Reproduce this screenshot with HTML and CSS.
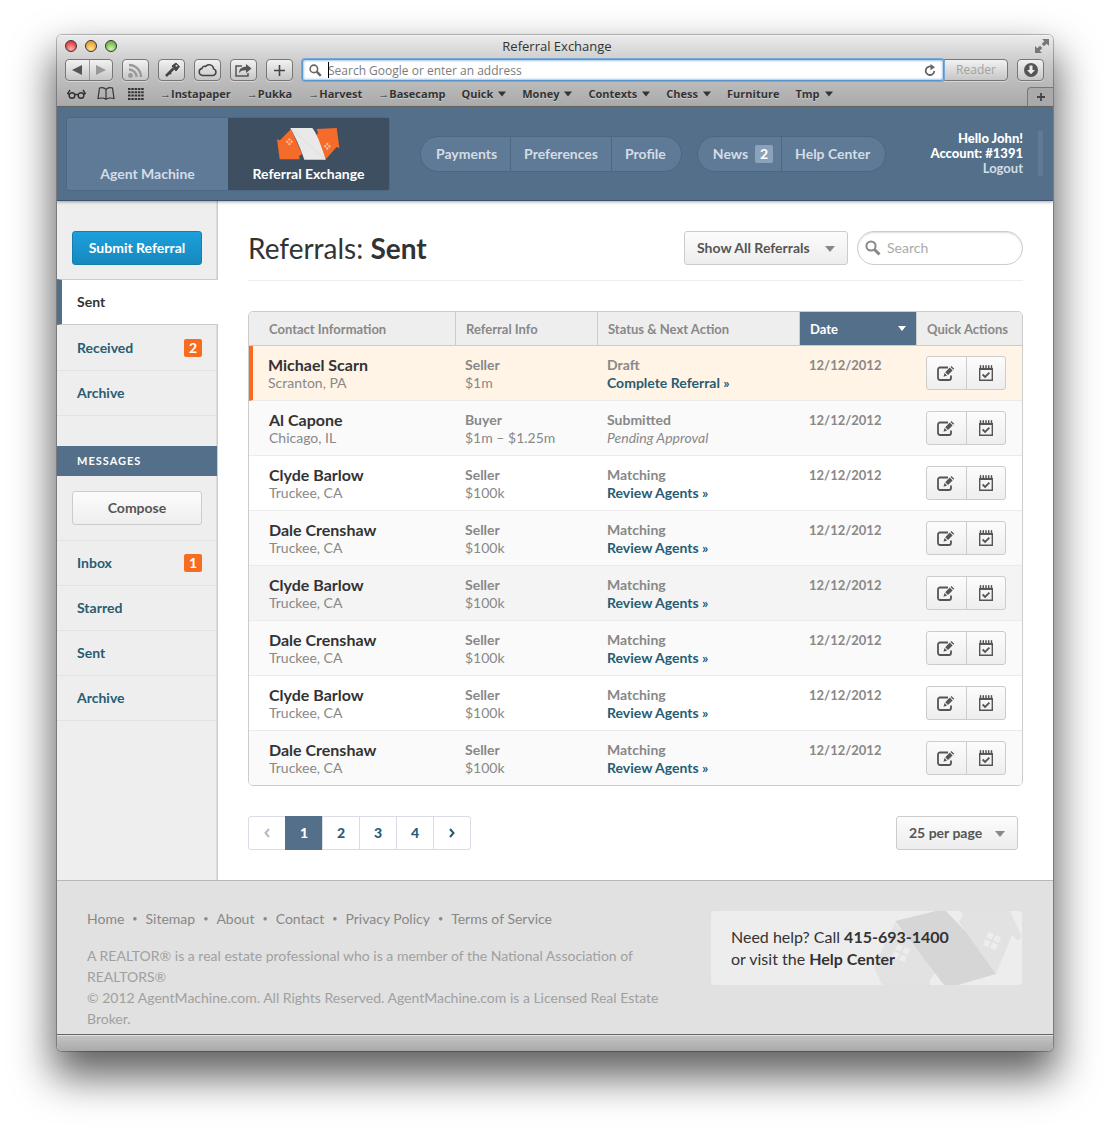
FILE: index.html
```html
<!DOCTYPE html>
<html lang="en">
<head>
<meta charset="utf-8">
<title>Referral Exchange</title>
<link rel="stylesheet" href="styles.css">
</head>
<body>
<svg class="sprite" aria-hidden="true">
  <symbol id="edit" viewBox="0 0 18 17">
    <path d="M14 10.500V13a2 2 0 0 1-2 2H3a2 2 0 0 1-2-2V4.500a2 2 0 0 1 2-2h8" fill="none" stroke="#555" stroke-width="1.800"/>
    <path d="M6.500 11.700l1-3.700 2.600 2.600zM8.200 7.200l4.600-4.600 2.800 2.800-4.600 4.500zM13.500 1.900l.9-.9 2.800 2.800-.9.900z" fill="#555"/>
  </symbol>
  <symbol id="calendar" viewBox="0 0 16 18">
    <path d="M1.700 4.700h12.600v11.600H1.700z" fill="none" stroke="#555" stroke-width="1.400"/>
    <path d="M1 5h14" stroke="#555" stroke-width="1.800"/>
    <path d="M2.500 4V1.800M5.300 4V1.800M8 4V1.800M10.700 4V1.800M13.500 4V1.800" stroke="#555" stroke-width="1.500" stroke-linecap="round"/>
    <path d="M4.600 10.500l2.500 2.500 4.300-4.300" fill="none" stroke="#555" stroke-width="1.800"/>
  </symbol>
  <symbol id="caret" viewBox="0 0 10 6"><path d="M0 0h10L5 6z" fill="currentColor"/></symbol>
  <symbol id="lens" viewBox="0 0 16 16">
    <circle cx="6" cy="6" r="4.600" fill="none" stroke="currentColor" stroke-width="2"/>
    <path d="M9.500 9.500l5 5" stroke="currentColor" stroke-width="3"/>
  </symbol>
</svg>

<div class="window">
  <div class="chrome">
    <div class="titlebar">
      <span class="lights"><i class="red"></i><i class="amber"></i><i class="green"></i></span>
      <span class="window-title">Referral Exchange</span>
      <svg class="expand" width="14" height="14" viewBox="0 0 14 14" fill="#777"><path d="M7 0h7v7l-2.300-2.300L9 7.300 6.700 5l2.600-2.700zM0 7l2.300 2.300L5 6.700 7.300 9l-2.600 2.700L7 14H0z"/></svg>
    </div>
    <div class="toolbar">
      <div class="history">
        <button aria-label="Back"><svg width="10" height="10" viewBox="0 0 10 10"><path d="M10 0v10L0 5z" fill="#555"/></svg></button>
        <button aria-label="Forward"><svg width="10" height="10" viewBox="0 0 10 10"><path d="M0 0v10l10-5z" fill="#999"/></svg></button>
      </div>
      <button class="tool" aria-label="Feeds"><svg width="15" height="15" viewBox="0 0 15 15" fill="none" stroke="#999" stroke-width="2.400"><circle cx="2.500" cy="12.500" r="1.200" fill="#999"/><path d="M1 6.500A7.500 7.500 0 0 1 8.500 14M1 2a12 12 0 0 1 12 12"/></svg></button>
      <button class="tool" aria-label="Passwords"><svg width="16" height="16" viewBox="0 0 16 16"><path d="M8 4l4-3 3.500 3.500L12 9z" fill="#444" stroke="#444" stroke-linejoin="round"/><path d="M9.500 6.500L2 14" stroke="#444" stroke-width="2.600"/><path d="M5 10l2 2" stroke="#444" stroke-width="2"/><circle cx="12.500" cy="3.700" r="1" fill="#ddd"/></svg></button>
      <button class="tool" aria-label="Cloud tabs"><svg width="20" height="14" viewBox="0 0 20 14"><path d="M4.500 12.500a3.500 3.500 0 0 1-.6-6.900 2.700 2.700 0 0 1 3.600-2.100 4.500 4.500 0 0 1 8.100 2.400 3.400 3.400 0 0 1-.6 6.600z" fill="none" stroke="#444" stroke-width="1.500"/></svg></button>
      <button class="tool" aria-label="Share"><svg width="17" height="14" viewBox="0 0 17 14"><path d="M7 3H1v10h12v-3" fill="none" stroke="#555" stroke-width="1.500"/><path d="M4 10c0-4 2.500-6.300 7-6.300V1l5.500 4.500L11 10V7.200C8 7 6 7.500 4 10z" fill="#555"/></svg></button>
      <button class="tool" aria-label="Add bookmark"><svg width="11" height="11" viewBox="0 0 11 11"><path d="M5.500 0v11M0 5.500h11" stroke="#444" stroke-width="1.600"/></svg></button>
      <div class="address">
        <svg class="address-lens" width="13" height="13"><use href="#lens"/></svg>
        <input type="text" aria-label="Address" placeholder="Search Google or enter an address">
        <span class="cursor"></span>
        <svg width="12" height="13" viewBox="0 0 12 13"><path d="M8.500 3.200A4.300 4.300 0 1 0 10.300 7" fill="none" stroke="#666" stroke-width="1.800"/><path d="M6.500 0l4.500 3.300-4.500 3z" fill="#666"/></svg>
      </div>
      <button class="reader" disabled>Reader</button>
      <button class="tool download" aria-label="Downloads"><svg width="14" height="14" viewBox="0 0 14 14"><circle cx="7" cy="7" r="7" fill="#555"/><path d="M5.500 2.500h3V7H11l-4 4.300L3 7h2.500z" fill="#eee"/></svg></button>
    </div>
    <div class="bookmarks">
      <svg width="19" height="10" viewBox="0 0 19 10" fill="none" stroke="#333" stroke-width="1.400"><circle cx="5" cy="6.500" r="2.800"/><circle cx="14" cy="6.500" r="2.800"/><path d="M7.800 5.500h3.400M2.300 5.500L.7 4.500 3 1M16.700 5.500l1.600-1L16 1"/></svg>
      <svg class="book" width="18" height="13" viewBox="0 0 18 13" fill="none" stroke="#333" stroke-width="1.200"><path d="M9 2.500C7.500.5 4.500.5 2.500 1L1 11.500c3-.8 6-.5 8 .8 2-1.300 5-1.600 8-.8L15.500 1c-2-.5-5-.5-6.500 1.500zM9 2.500v9.800"/></svg>
      <svg class="dots" width="16" height="12" viewBox="0 0 16 12" stroke="#333" stroke-width="2"><path d="M0 1h16M0 4.300h16M0 7.600h16M0 10.900h16" stroke-dasharray="2.500 .8"/></svg>
      <a href="#">→Instapaper</a><a href="#">→Pukka</a><a href="#">→Harvest</a><a href="#">→Basecamp</a>
      <a href="#">Quick<svg width="8" height="6"><use href="#caret"/></svg></a>
      <a href="#">Money<svg width="8" height="6"><use href="#caret"/></svg></a>
      <a href="#">Contexts<svg width="8" height="6"><use href="#caret"/></svg></a>
      <a href="#">Chess<svg width="8" height="6"><use href="#caret"/></svg></a>
      <a href="#">Furniture</a>
      <a href="#">Tmp<svg width="8" height="6"><use href="#caret"/></svg></a>
      <button class="new-tab" aria-label="New tab"><svg width="8" height="8" viewBox="0 0 8 8"><path d="M4 0v8M0 4h8" stroke="#444" stroke-width="1.800"/></svg></button>
    </div>
  </div>

  <header class="app-header">
    <nav class="apps">
      <a href="#">Agent Machine</a>
      <a href="#" class="current">
        <svg width="63" height="32" viewBox="0 0 63 32">
          <path d="M14 1L3 12.300l-3-1 2.700 20h20l-.6-3.300 3-2z" fill="#f56b2a"/>
          <path d="M39.700 1l20-1 2.700 20-2.800-1-11 12.500L38.500 8l2.500-3z" fill="#f56b2a"/>
          <path d="M13.300 0h22C39 4 45 19 48.700 31.700H27.300C24 22 20 12 13.300 0z" fill="#e9e9e9"/>
          <path d="M15 2c8 7 18 15 33 29.700" stroke="#ddd" fill="none"/>
          <path d="M12.300 10l1.500 1.500-1.500 1.500-1.500-1.500zM14.500 12.200l1.500 1.500-1.500 1.500-1.500-1.500zM10.200 12.200l1.500 1.500-1.500 1.500-1.500-1.500zM12.300 14.400l1.500 1.500-1.500 1.500-1.500-1.500zM50.300 14.500l1.500 1.500-1.500 1.500-1.500-1.500zM52.500 16.700l1.500 1.500-1.500 1.500-1.500-1.500zM48.200 16.700l1.500 1.500-1.500 1.500-1.500-1.500zM50.300 18.900l1.500 1.500-1.500 1.500-1.500-1.500z" fill="#fbbd98"/>
        </svg>
        Referral Exchange
      </a>
    </nav>
    <nav class="pills">
      <a href="#">Payments</a><a href="#">Preferences</a><a href="#">Profile</a>
    </nav>
    <nav class="pills">
      <a href="#">News <span class="count">2</span></a><a href="#">Help Center</a>
    </nav>
    <div class="user">
      <strong>Hello John!</strong>
      <strong>Account: #1391</strong>
      <a href="#">Logout</a>
    </div>
  </header>

  <div class="content">
    <aside class="sidebar">
      <div class="action"><button class="primary">Submit Referral</button></div>
      <ul class="menu">
        <li class="active"><a href="#">Sent</a></li>
        <li><a href="#">Received <span class="badge">2</span></a></li>
        <li><a href="#">Archive</a></li>
      </ul>
      <h2>MESSAGES</h2>
      <div class="compose"><button class="plain">Compose</button></div>
      <ul class="menu">
        <li><a href="#">Inbox <span class="badge">1</span></a></li>
        <li><a href="#">Starred</a></li>
        <li><a href="#">Sent</a></li>
        <li><a href="#">Archive</a></li>
      </ul>
    </aside>

    <main>
      <div class="heading">
        <h1>Referrals: <strong>Sent</strong></h1>
        <div class="picker filter">
          <select aria-label="Filter referrals"><option>Show All Referrals</option></select>
          <svg width="10" height="6"><use href="#caret"/></svg>
        </div>
        <label class="search">
          <svg width="16" height="16"><use href="#lens"/></svg>
          <input type="search" placeholder="Search" aria-label="Search">
        </label>
      </div>

      <div class="table-frame">
        <table>
          <colgroup><col><col class="c-info"><col class="c-status"><col class="c-date"><col class="c-actions"></colgroup>
          <thead>
            <tr><th>Contact Information</th><th>Referral Info</th><th>Status &amp; Next Action</th><th class="sorted"><span>Date <svg width="8" height="5" viewBox="0 0 10 6"><path d="M0 0h10L5 6z" fill="#fff"/></svg></span></th><th>Quick Actions</th></tr>
          </thead>
          <tbody>
            <tr class="draft"><td><b>Michael Scarn</b>Scranton, PA</td><td><strong>Seller</strong>$1m</td><td><strong>Draft</strong><a href="#">Complete Referral »</a></td><td class="date"><strong>12/12/2012</strong></td><td><div class="quick"><button aria-label="Edit"><svg width="18" height="17"><use href="#edit"/></svg></button><button aria-label="Schedule"><svg width="16" height="18"><use href="#calendar"/></svg></button></div></td></tr>
            <tr><td><b>Al Capone</b>Chicago, IL</td><td><strong>Buyer</strong>$1m – $1.25m</td><td><strong>Submitted</strong><em>Pending Approval</em></td><td class="date"><strong>12/12/2012</strong></td><td><div class="quick"><button aria-label="Edit"><svg width="18" height="17"><use href="#edit"/></svg></button><button aria-label="Schedule"><svg width="16" height="18"><use href="#calendar"/></svg></button></div></td></tr>
            <tr><td><b>Clyde Barlow</b>Truckee, CA</td><td><strong>Seller</strong>$100k</td><td><strong>Matching</strong><a href="#">Review Agents »</a></td><td class="date"><strong>12/12/2012</strong></td><td><div class="quick"><button aria-label="Edit"><svg width="18" height="17"><use href="#edit"/></svg></button><button aria-label="Schedule"><svg width="16" height="18"><use href="#calendar"/></svg></button></div></td></tr>
            <tr><td><b>Dale Crenshaw</b>Truckee, CA</td><td><strong>Seller</strong>$100k</td><td><strong>Matching</strong><a href="#">Review Agents »</a></td><td class="date"><strong>12/12/2012</strong></td><td><div class="quick"><button aria-label="Edit"><svg width="18" height="17"><use href="#edit"/></svg></button><button aria-label="Schedule"><svg width="16" height="18"><use href="#calendar"/></svg></button></div></td></tr>
            <tr class="hovered"><td><b>Clyde Barlow</b>Truckee, CA</td><td><strong>Seller</strong>$100k</td><td><strong>Matching</strong><a href="#">Review Agents »</a></td><td class="date"><strong>12/12/2012</strong></td><td><div class="quick"><button aria-label="Edit"><svg width="18" height="17"><use href="#edit"/></svg></button><button aria-label="Schedule"><svg width="16" height="18"><use href="#calendar"/></svg></button></div></td></tr>
            <tr><td><b>Dale Crenshaw</b>Truckee, CA</td><td><strong>Seller</strong>$100k</td><td><strong>Matching</strong><a href="#">Review Agents »</a></td><td class="date"><strong>12/12/2012</strong></td><td><div class="quick"><button aria-label="Edit"><svg width="18" height="17"><use href="#edit"/></svg></button><button aria-label="Schedule"><svg width="16" height="18"><use href="#calendar"/></svg></button></div></td></tr>
            <tr><td><b>Clyde Barlow</b>Truckee, CA</td><td><strong>Seller</strong>$100k</td><td><strong>Matching</strong><a href="#">Review Agents »</a></td><td class="date"><strong>12/12/2012</strong></td><td><div class="quick"><button aria-label="Edit"><svg width="18" height="17"><use href="#edit"/></svg></button><button aria-label="Schedule"><svg width="16" height="18"><use href="#calendar"/></svg></button></div></td></tr>
            <tr><td><b>Dale Crenshaw</b>Truckee, CA</td><td><strong>Seller</strong>$100k</td><td><strong>Matching</strong><a href="#">Review Agents »</a></td><td class="date"><strong>12/12/2012</strong></td><td><div class="quick"><button aria-label="Edit"><svg width="18" height="17"><use href="#edit"/></svg></button><button aria-label="Schedule"><svg width="16" height="18"><use href="#calendar"/></svg></button></div></td></tr>
          </tbody>
        </table>
      </div>

      <div class="paging">
        <nav class="pages">
          <a href="#" class="off" aria-label="Previous"><svg width="6" height="10" viewBox="0 0 6 10"><path d="M5 1L1.500 5 5 9" fill="none" stroke="currentColor" stroke-width="2"/></svg></a>
          <a href="#" class="current">1</a><a href="#">2</a><a href="#">3</a><a href="#">4</a>
          <a href="#" aria-label="Next"><svg width="6" height="10" viewBox="0 0 6 10"><path d="M1 1l3.500 4L1 9" fill="none" stroke="currentColor" stroke-width="2"/></svg></a>
        </nav>
        <div class="picker per-page">
          <select aria-label="Rows per page"><option>25 per page</option></select>
          <svg width="10" height="6"><use href="#caret"/></svg>
        </div>
      </div>
    </main>
  </div>

  <footer class="app-footer">
    <div class="legal">
      <ul><li><a href="#">Home</a></li><li><a href="#">Sitemap</a></li><li><a href="#">About</a></li><li><a href="#">Contact</a></li><li><a href="#">Privacy Policy</a></li><li><a href="#">Terms of Service</a></li></ul>
      <p>A REALTOR® is a real estate professional who is a member of the National Association of REALTORS®</p>
      <p>© 2012 AgentMachine.com. All Rights Reserved. AgentMachine.com is a Licensed Real Estate Broker.</p>
    </div>
    <div class="help">
      <svg width="148" height="74" viewBox="163 0 148 74">
        <path d="M184 12L163 56l8 18h48v-5l5-7zM249 0h50l11 24c1 4-2 5-4 5l-5-5-16 39-37-52 4-8z" fill="#e2e2e2"/>
        <path d="M184 10l41-10h10l20 21 30 42-38 11h-14z" fill="#d6d6d6"/>
        <g fill="#ededed">
          <g transform="rotate(24 190 42)"><rect x="183" y="35" width="6" height="6" rx="1"/><rect x="191" y="35" width="6" height="6" rx="1"/><rect x="183" y="43" width="6" height="6" rx="1"/><rect x="191" y="43" width="6" height="6" rx="1"/></g>
          <g transform="rotate(24 281 30)"><rect x="274" y="23" width="6" height="6" rx="1"/><rect x="282" y="23" width="6" height="6" rx="1"/><rect x="274" y="31" width="6" height="6" rx="1"/><rect x="282" y="31" width="6" height="6" rx="1"/></g>
        </g>
      </svg>
      <p>Need help? Call <strong>415-693-1400</strong><br>or visit the <strong>Help Center</strong></p>
    </div>
  </footer>
  <div class="statusbar"></div>
</div>
</body>
</html>
```
FILE: styles.css
```css
* { box-sizing: border-box; }
body { margin: 0; padding: 35px 57px 78px; background: #fff; font: 14px/18px Lato, "Liberation Sans", sans-serif; color: #888; }
a { color: inherit; text-decoration: none; }
button, input, select { font: inherit; color: inherit; margin: 0; }
button { display: flex; align-items: center; justify-content: center; padding: 0; cursor: pointer; }
ul, h1, h2, p { margin: 0; padding: 0; list-style: none; }
svg { display: block; flex: none; }
.sprite { position: absolute; width: 0; height: 0; }

.window { border-radius: 5px; overflow: hidden; box-shadow: 0 0 0 1px rgba(0,0,0,.25), 0 22px 40px 4px rgba(0,0,0,.62); }

/* Browser frame */
.chrome { height: 72px; background: linear-gradient(#ebebeb, #c6c6c6 32px, #aaa); border-bottom: 1px solid #686868; box-shadow: inset 0 1px #f4f4f4; color: #333; font-family: "Open Sans", sans-serif; }
.titlebar { display: grid; grid-template-columns: 1fr auto 1fr; align-items: center; height: 22px; padding: 0 4px 0 8px; }
.lights { display: flex; gap: 8px; }
.lights i { width: 12px; height: 12px; border-radius: 50%; border: 1px solid; }
.red { background: radial-gradient(circle at 50% 80%, #ffb0a8, #e8404a 70%); border-color: #9c2c30; }
.amber { background: radial-gradient(circle at 50% 80%, #ffe69a, #eea035 70%); border-color: #9a6a25; }
.green { background: radial-gradient(circle at 50% 80%, #d2f3a5, #76b850 70%); border-color: #4d7c38; }
.window-title { font-size: 13px; }
.expand { justify-self: end; }
.toolbar { display: flex; align-items: center; gap: 9px; height: 26px; padding: 0 9px 0 8px; }
.history, .tool, .reader { height: 22px; border: 1px solid #777; border-radius: 4px; background: linear-gradient(#f2f2f2, #c6c6c6); box-shadow: 0 1px rgba(255,255,255,.4); }
.history { display: flex; width: 48px; }
.history button { flex: 1; border: 0; background: none; }
.history button + button { border-left: 1px solid #999; }
.tool { width: 27px; }
.address { flex: 1; position: relative; display: flex; align-items: center; gap: 6px; height: 22px; padding: 0 7px 0 6px; background: #fff; border: 1px solid #5c94cc; border-radius: 3px; box-shadow: 0 0 0 1px #79a9d8, inset 0 0 2px 1px #a9c9e8; color: #666; }
.address input { flex: 1; min-width: 0; height: 20px; padding: 0; border: 0; outline: 0; background: none; font-size: 12px; }
.address input::placeholder { color: #7c7c7c; opacity: 1; }
.cursor { position: absolute; left: 25px; top: 2px; width: 1px; height: 16px; background: #000; }
.reader { width: 64px; margin-left: -9px; border-radius: 0 4px 4px 0; color: #a2a2a2; font-size: 12px; }
.bookmarks { display: flex; align-items: center; gap: 16px; height: 23px; padding: 0 0 2px 10px; font-size: 11px; font-weight: 700; white-space: nowrap; }
.bookmarks a { display: flex; align-items: center; gap: 5px; text-shadow: 0 1px rgba(255,255,255,.4); }
.book { margin-left: -5px; }
.dots { margin-left: -3px; }
.new-tab { align-self: flex-end; width: 26px; height: 19px; margin: 0 0 -2px auto; border: solid #777; border-width: 1px 0 0 1px; border-radius: 4px 0 0 0; background: #aaa; }
.statusbar { height: 17px; background: linear-gradient(#c4c4c4, #aaa); border-top: 1px solid #666; box-shadow: inset 0 1px #e0e0e0; }

/* Application header */
.app-header { display: flex; align-items: center; height: 94px; padding: 0 10px 0 9px; background: #546f8a; border-bottom: 1px solid #3c536b; color: #d5dde6; font-weight: 700; position: relative; box-shadow: 0 1px 3px rgba(0,0,0,.35); }
.apps { display: flex; width: 324px; height: 74px; border: 1px solid #4b6784; border-radius: 3px; background: #5e7a96; }
.apps a { flex: 1; display: flex; flex-direction: column; align-items: center; justify-content: flex-end; gap: 5px; padding-bottom: 7px; }
.apps .current { background: #3e4f62; color: #fff; }
.pills { display: flex; height: 36px; margin-left: 30px; border: 1px solid #4b6784; border-radius: 18px; background: #5e7a96; }
.pills + .pills { margin-left: 15px; }
.pills a { display: flex; align-items: center; gap: 7px; padding: 0 13px; }
.pills a:first-child { padding-left: 15px; }
.pills a:last-child { padding-right: 15px; }
.pills a + a { border-left: 1px solid #4b6784; }
.pills a:has(.count) { padding-right: 8px; }
.count { width: 18px; line-height: 18px; text-align: center; border-radius: 2px; background: #8da2b8; color: #fff; }
.user { display: flex; flex-direction: column; margin-left: auto; padding-right: 15px; border-right: 5px solid #5e7a96; text-align: right; font-size: 13px; line-height: 15px; }
.user strong { color: #fff; }

/* Sidebar */
.content { display: flex; background: #fff; }
.sidebar { width: 161px; background: #eee; border-right: 1px solid #ccc; box-shadow: inset -1px 0 #dcdcdc; }
.action { padding: 30px 15px 14px; }
.primary, .plain { width: 100%; height: 34px; border-radius: 3px; font-weight: 700; }
.primary { border: 1px solid #147fae; background: linear-gradient(#1ca0dc, #1788bd); color: #fff; }
.plain { border: 1px solid #ccc; background: linear-gradient(#fcfcfc, #eee); color: #555; }
.menu a { display: flex; align-items: center; justify-content: space-between; height: 45px; padding: 0 15px 0 20px; border-bottom: 1px solid #e2e2e2; color: #285c73; font-weight: 700; }
.menu .active { position: relative; margin: 0 -1px 1px 0; }
.menu .active a { height: 46px; padding-left: 15px; background: #fff; border: solid #ccc; border-width: 1px 0; border-left: 5px solid #546f8a; color: #333; }
.badge { width: 18px; line-height: 18px; border-radius: 2px; background: #f76c20; color: #fff; text-align: center; }
.sidebar h2 { margin: 30px 0 0; padding-left: 20px; background: #546f8a; color: #fff; font-size: 11px; line-height: 30px; letter-spacing: 1px; }
.compose { padding: 15px; border-bottom: 1px solid #e2e2e2; }

/* Referral list */
main { flex: 1; min-width: 0; padding: 30px; }
.heading { display: flex; align-items: center; gap: 9px; padding-bottom: 15px; border-bottom: 1px solid #eee; }
h1 { margin-right: auto; color: #333; font-size: 28px; line-height: 32px; font-weight: 400; }
.picker { position: relative; color: #888; }
.picker select { appearance: none; width: 100%; height: 34px; padding: 0 12px; border: 1px solid #ccc; border-radius: 3px; background: linear-gradient(#fcfcfc, #ededed); color: #555; font-weight: 700; }
.picker svg { position: absolute; right: 13px; top: 15px; pointer-events: none; }
.filter { width: 164px; }
.per-page { width: 122px; margin-right: 5px; }
.search { display: flex; align-items: center; gap: 6px; width: 166px; height: 34px; padding: 0 7px; border: 1px solid #ccc; border-radius: 17px; box-shadow: inset 0 1px 2px #ddd; }
.search input { flex: 1; min-width: 0; padding: 0; border: 0; background: none; outline: 0; }
.search input::placeholder { color: #aaa; opacity: 1; }
.table-frame { margin-top: 30px; border: 1px solid #ccc; border-radius: 5px; overflow: hidden; }
table { width: 100%; table-layout: fixed; border-spacing: 0; }
.c-info { width: 142px; }
.c-status { width: 202px; }
.c-date { width: 117px; }
.c-actions { width: 106px; }
th { height: 34px; padding: 0 10px; border-bottom: 1px solid #ccc; background: #eee; text-align: left; font-size: 13px; font-weight: 700; white-space: nowrap; }
th + th { border-left: 1px solid #ccc; }
th:first-child { padding-left: 20px; }
.sorted { background: #546f8a; color: #fff; }
.sorted span { display: flex; align-items: center; justify-content: space-between; }
td { height: 55px; padding: 10px 0 8px 10px; border-bottom: 1px solid #ebebeb; vertical-align: top; }
td:first-child { padding-left: 20px; }
tbody tr:nth-child(even) { background: #fafafa; }
tbody tr:last-child td { height: 54px; border-bottom: 0; }
tbody .draft { background: #fff4e6; }
.draft td:first-child { padding-left: 15px; border-left: 4px solid #f76c20; }
tbody .hovered { background: #f4f4f4; }
td b { display: block; color: #333; font-size: 16px; }
td strong, td em { display: block; }
td a { color: #285c73; font-weight: 700; }
.date { font-size: 13px; }
.quick { display: flex; width: 80px; height: 34px; border: 1px solid #ccc; border-radius: 3px; background: linear-gradient(#fcfcfc, #eee); }
.quick button { flex: 1; border: 0; background: none; }
.quick button + button { border-left: 1px solid #ccc; }
.paging { display: flex; justify-content: space-between; margin-top: 30px; }
.pages { display: flex; border: 1px solid #d9dbe5; border-radius: 3px; font-weight: 900; color: #285c73; }
.pages a { display: flex; align-items: center; justify-content: center; width: 37px; height: 32px; }
.pages a + a { border-left: 1px solid #d9dbe5; }
.pages .off { width: 36px; color: #bbb; }
.pages .current { height: 34px; margin: -1px 0; background: #546f8a; border-color: #546f8a; color: #fff; }

/* Footer */
.app-footer { display: flex; align-items: flex-start; justify-content: space-between; min-height: 154px; padding: 30px 31px 4px 30px; border-top: 1px solid #b8b8b8; background: #e1e1e1; }
.legal { flex: 1; max-width: 594px; color: #a0a0a0; line-height: 21px; }
.legal ul { display: flex; gap: 8px; margin-bottom: 18px; line-height: 16px; color: #888; }
.legal li { display: flex; align-items: center; gap: 8px; }
.legal li + li::before { content: "•"; font-size: 9px; }
.help { position: relative; width: 311px; height: 74px; padding: 15px 20px; border-radius: 4px; overflow: hidden; background: #ededed; color: #333; font-size: 16px; line-height: 22px; }
.help svg { position: absolute; right: 0; top: 0; }
.help p { position: relative; }
```
